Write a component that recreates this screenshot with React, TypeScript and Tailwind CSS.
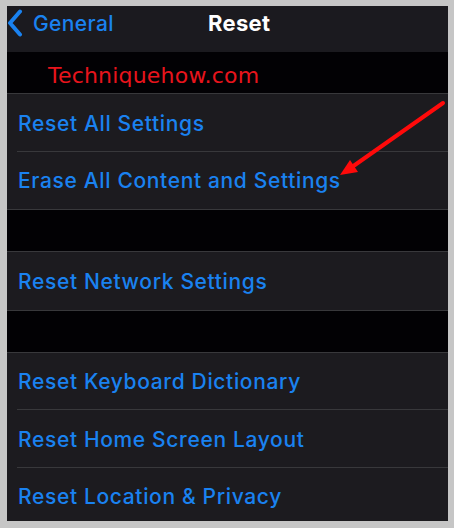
import React from "react";

const BLUE = "text-[#1a82f0]";

function Row({ label, sep }: { label: string; sep?: boolean }) {
  return (
    <div className="relative flex h-[57.5px] items-center bg-[#1c1b1f] pl-[11px] pt-[1px]">
      <span className={`${BLUE} text-[21px] font-medium leading-none tracking-[0.65px]`}>{label}</span>
      {sep && <div className="absolute bottom-0 left-[10px] right-0 h-px bg-[#38383b]" />}
    </div>
  );
}

function Group({ items }: { items: string[] }) {
  return (
    <div className="border-y border-[#38383b]">
      {items.map((t, i) => (
        <Row key={t} label={t} sep={i < items.length - 1} />
      ))}
    </div>
  );
}

export default function App() {
  return (
    <div
      className="relative h-[528px] w-[454px] overflow-hidden bg-[#c6c6c6] pb-[7px] pl-[7px] pr-[6px] pt-[6px]"
      style={{ fontFamily: "Inter, 'Noto Sans', sans-serif" }}
    >
      <div className="flex h-full flex-col overflow-hidden bg-[#020104]">
        {/* nav */}
        <div className="grid h-[46px] shrink-0 grid-cols-[201px_auto_1fr] items-center bg-[#1b1a1f] pb-[12px]">
          <div className="flex items-center">
            <svg width="18" height="28" viewBox="0 0 18 28" className="ml-[-1px]">
              <path d="M14 2.5 L4 14 L14 25.5" fill="none" stroke="#1a82f0" strokeWidth="4" strokeLinecap="round" strokeLinejoin="round" />
            </svg>
            <span className={`${BLUE} ml-[9px] text-[21px] font-medium leading-none tracking-[0.4px]`}>General</span>
          </div>
          <span className="text-[22px] font-bold leading-none tracking-[0.3px] text-white">Reset</span>
          <div />
        </div>
        {/* watermark band */}
        <div className="flex h-[41px] shrink-0 items-center pl-[41px] pt-[6px]">
          <span
            className="text-[22px] leading-none tracking-[0.2px] text-[#e8141c]"
            style={{ fontFamily: "'DejaVu Sans', sans-serif" }}
          >
            Techniquehow.com
          </span>
        </div>
        <Group items={["Reset All Settings", "Erase All Content and Settings"]} />
        <div className="h-[41px] shrink-0" />
        <Group items={["Reset Network Settings"]} />
        <div className="h-[41px] shrink-0" />
        <Group items={["Reset Keyboard Dictionary", "Reset Home Screen Layout", "Reset Location & Privacy"]} />
      </div>
      <svg className="pointer-events-none absolute left-0 top-0" width="454" height="528">
        <line x1="443" y1="103" x2="352" y2="167" stroke="#ff0a0a" strokeWidth="4" strokeLinecap="round" />
        <polygon points="340,175 350,160 358,172" fill="#ff0a0a" />
      </svg>
    </div>
  );
}
